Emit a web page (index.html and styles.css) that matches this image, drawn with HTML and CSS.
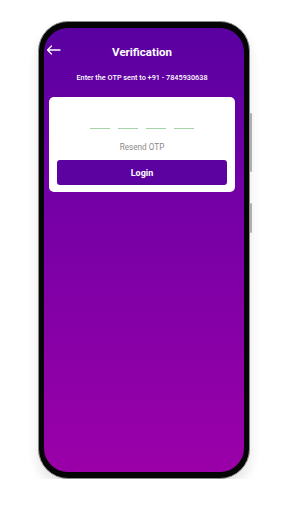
FILE: index.html
```html
<!DOCTYPE html>
<html lang="en">
<head>
    <meta charset="UTF-8">
    <meta name="viewport" content="width=device-width, initial-scale=1.0">
    <title>Verification</title>
    <link rel="stylesheet" href="styles.css">
</head>
<body>
    <div class="phone">
        <span class="side-btn side-btn-top"></span>
        <span class="side-btn side-btn-bottom"></span>
        <div class="screen">
            <div class="header">
                <svg class="back" width="15" height="10" viewBox="0 0 15 10">
                    <path d="M14 5H1.5M5.5 1L1.5 5L5.5 9" fill="none" stroke="#fff" stroke-width="1.3" stroke-linecap="round" stroke-linejoin="round"/>
                </svg>
                <h1>Verification</h1>
            </div>
            <p class="subtitle">Enter the OTP sent to +91 - 7845930638</p>

            <div class="card">
                <div class="otp">
                    <span class="otp-box"></span>
                    <span class="otp-box"></span>
                    <span class="otp-box"></span>
                    <span class="otp-box"></span>
                </div>
                <div class="resend">Resend OTP</div>
                <button class="login">Login</button>
            </div>
        </div>
    </div>
</body>
</html>
```

FILE: styles.css
```css
body {
    margin: 0;
    background-color: #fff;
    font-family: Roboto, "Liberation Sans", sans-serif;
    display: flex;
    justify-content: center;
}

.phone {
    position: relative;
    box-sizing: border-box;
    width: 212px;
    height: 458px;
    margin-top: 21px;
    padding: 6px 5px;
    background-color: #050505;
    border: 1px solid #8c8c8c;
    border-radius: 30px;
    box-shadow: 0 8px 12px rgba(0, 0, 0, 0.10);
}

.side-btn {
    position: absolute;
    right: -3px;
    width: 2px;
    background-color: #b0b0b0;
    border-radius: 1px;
}

.side-btn-top {
    top: 91px;
    height: 59px;
}

.side-btn-bottom {
    top: 181px;
    height: 30px;
}

.screen {
    height: 100%;
    border-radius: 24px;
    overflow: hidden;
    background: linear-gradient(180deg, #5a00a1 0%, #7800a6 45%, #9b00a8 100%);
    padding: 0 9px 0 5px;
    box-sizing: border-box;
}

.header {
    position: relative;
    height: 16px;
    margin-top: 16px;
    display: flex;
    align-items: center;
    justify-content: center;
}

.back {
    position: absolute;
    left: -3px;
    top: 1px;
}

h1 {
    margin: 0;
    color: #fff;
    font-size: 11.5px;
    font-weight: 700;
}

.subtitle {
    margin: 13px 0 0;
    text-align: center;
    color: #fff;
    font-size: 7.3px;
    font-weight: 500;
}

.card {
    margin-top: 15px;
    background-color: #fff;
    border-radius: 5px;
    padding: 31px 8px 7px;
    display: flex;
    flex-direction: column;
    align-items: center;
}

.otp {
    display: flex;
    gap: 8px;
}

.otp-box {
    width: 20px;
    height: 1px;
    background-color: #a5d6a7;
}

.resend {
    margin-top: 13px;
    color: #8a8a8a;
    font-size: 8.2px;
}

.login {
    margin-top: 8px;
    width: 100%;
    height: 25px;
    border: none;
    border-radius: 3px;
    background-color: #5b02a0;
    color: #fff;
    font-family: Roboto, "Liberation Sans", sans-serif;
    font-size: 9px;
    font-weight: 700;
}
```
